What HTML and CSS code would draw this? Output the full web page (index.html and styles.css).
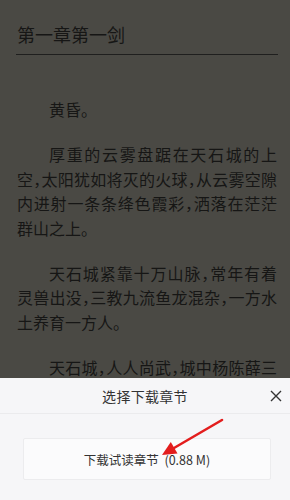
FILE: index.html
```html
<html>

<head>
    <title>第一章第一剑</title>
    <link rel="stylesheet" href="styles.css">
</head>

<body>
	<div class='reader'>
		<h1 class='chapter'>第一章第一剑</h1>
		<div class='content'>
			<p>黄昏。</p>
			<p>厚重的云雾盘踞在天石城的上空，太阳犹如将灭的火球，从云雾空隙内进射一条条绛色霞彩，洒落在茫茫群山之上。</p>
			<p>天石城紧靠十万山脉，常年有着灵兽出没，三教九流鱼龙混杂，一方水土养育一方人。</p>
			<p class='cut'>天石城，人人尚武，城中杨陈薛三</p>
		</div>
	</div>

	<div class='sheet'>
		<div class='sheet-head'>
			<span class='sheet-title'>选择下载章节</span>
			<span class='close'>
				<svg width="12" height="12" viewBox="0 0 12 12"><path d="M1 1L11 11M11 1L1 11" stroke="#333" stroke-width="1.4" fill="none"/></svg>
			</span>
		</div>
		<div class='sheet-body'>
			<button class='download'>下载试读章节&nbsp;&nbsp;(0.88 M)</button>
		</div>
		<svg class='arrow' width="72" height="46" viewBox="0 0 72 46">
			<path d="M67 6L19 34" stroke="#e31d1d" stroke-width="2.6" stroke-linecap="round" fill="none"/>
			<polygon points="7,41 22.5,39.5 15.8,28" fill="#e31d1d"/>
		</svg>
	</div>
</body>

</html>
```

FILE: styles.css
```css
body {
	margin: 0;
	background-color: #4a4944;
	color: #161615;
	font-family: "Noto Sans CJK SC", "Noto Sans", sans-serif;
}

.reader {
	padding: 22px 13px 0 17px;
}

.chapter {
	margin: 0 -1px 0 -1px;
	padding: 0 1px 8px 1px;
	font-size: 18px;
	line-height: 24px;
	font-weight: 400;
	border-bottom: 1px solid #1f1f1e;
}

.content {
	padding-top: 42px;
	width: 260px;
}

.content p {
	margin: 0 0 20.5px 0;
	font-size: 16px;
	line-height: 24.5px;
	text-indent: 2em;
	text-align: justify;
	font-feature-settings: "halt";
}

.content p.cut {
	text-align-last: justify;
}

.sheet {
	position: fixed;
	left: 0;
	right: 0;
	bottom: 0;
	height: 122px;
	background-color: #f6f6f8;
}

.sheet-head {
	height: 35px;
	display: flex;
	align-items: center;
	justify-content: center;
	border-bottom: 1px solid #ebebed;
	position: relative;
}

.sheet-title {
	font-size: 14px;
	color: #333;
	letter-spacing: 0.3px;
}

.close {
	position: absolute;
	right: 8px;
	top: 12px;
	width: 12px;
	height: 12px;
	display: flex;
}

.sheet-body {
	padding: 24px 19px 0 23px;
}

.download {
	width: 100%;
	height: 42px;
	border: 1px solid #ececee;
	border-radius: 2px;
	background-color: #fbfbfc;
	font-family: "Noto Sans CJK SC", "Noto Sans", sans-serif;
	font-size: 12.5px;
	color: #333;
}

.arrow {
	position: absolute;
	left: 155px;
	top: 36px;
}
```
